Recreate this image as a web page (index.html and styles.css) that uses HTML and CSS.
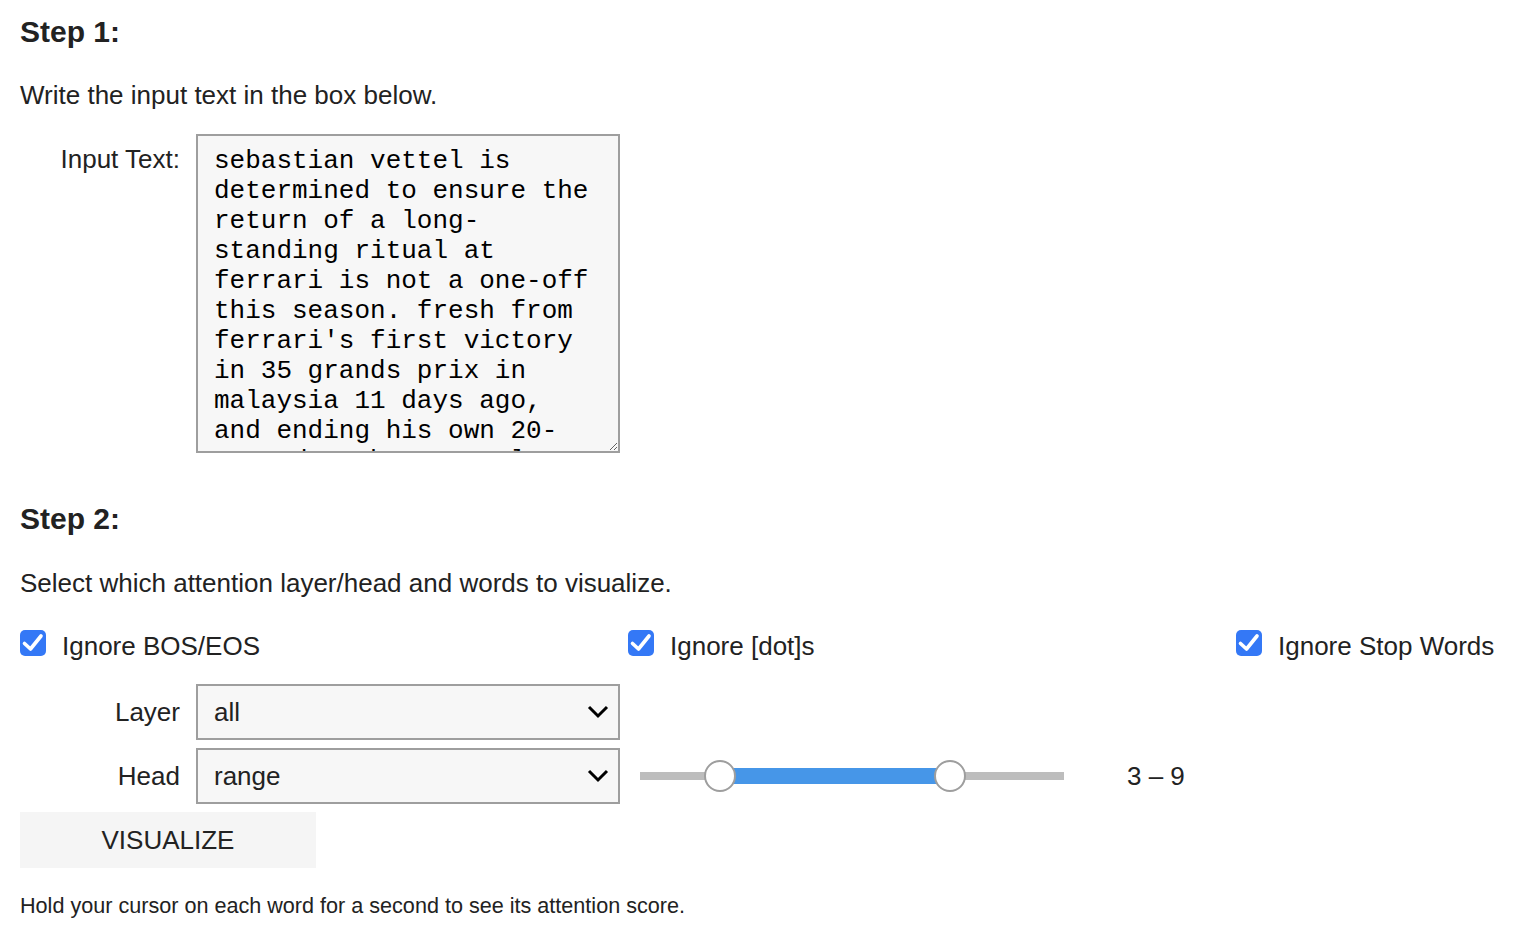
FILE: index.html
```html
<!DOCTYPE html>
<html lang="en">
<head>
<meta charset="utf-8">
<title>Attention Visualizer</title>
<link rel="stylesheet" href="styles.css">
</head>
<body>
<main class="page">
  <h3 class="step step-one">Step 1:</h3>
  <p class="intro">Write the input text in the box below.</p>

  <div class="widget-row row-text">
    <label class="widget-label label-text" for="inputText">Input Text:</label>
    <textarea id="inputText" class="textarea" spellcheck="false">sebastian vettel is determined to ensure the return of a long-standing ritual at ferrari is not a one-off this season. fresh from ferrari's first victory in 35 grands prix in malaysia 11 days ago, and ending his own 20-race drought, vettel was ordered to take part in a traditional celebration at the team's factory in maranello.</textarea>
  </div>

  <h3 class="step step-two">Step 2:</h3>
  <p class="select-intro">Select which attention layer/head and words to visualize.</p>

  <div class="checks">
    <div class="check">
      <span class="check-box"><svg width="26" height="26" viewBox="0 0 26 26"><path d="M4.5 13.5 L10.5 19 L21 6" fill="none" stroke="#fff" stroke-width="3.6" stroke-linecap="round" stroke-linejoin="round"/></svg></span>
      <span class="check-label">Ignore BOS/EOS</span>
    </div>
    <div class="check">
      <span class="check-box"><svg width="26" height="26" viewBox="0 0 26 26"><path d="M4.5 13.5 L10.5 19 L21 6" fill="none" stroke="#fff" stroke-width="3.6" stroke-linecap="round" stroke-linejoin="round"/></svg></span>
      <span class="check-label">Ignore [dot]s</span>
    </div>
    <div class="check">
      <span class="check-box"><svg width="26" height="26" viewBox="0 0 26 26"><path d="M4.5 13.5 L10.5 19 L21 6" fill="none" stroke="#fff" stroke-width="3.6" stroke-linecap="round" stroke-linejoin="round"/></svg></span>
      <span class="check-label">Ignore Stop Words</span>
    </div>
  </div>

  <div class="widget-row row-select">
    <span class="widget-label">Layer</span>
    <div class="dropdown">
      <span class="dropdown-value">all</span>
      <svg class="chevron" width="22" height="14" viewBox="0 0 22 14"><path d="M2 2 L11 11 L20 2" fill="none" stroke="#000" stroke-width="3"/></svg>
    </div>
  </div>

  <div class="widget-row row-select">
    <span class="widget-label">Head</span>
    <div class="dropdown">
      <span class="dropdown-value">range</span>
      <svg class="chevron" width="22" height="14" viewBox="0 0 22 14"><path d="M2 2 L11 11 L20 2" fill="none" stroke="#000" stroke-width="3"/></svg>
    </div>
    <div class="slider">
      <div class="track"></div>
      <div class="range" style="left:18.87%;width:54.24%"></div>
      <div class="thumb" style="left:18.87%"></div>
      <div class="thumb" style="left:73.11%"></div>
    </div>
    <span class="readout">3 – 9</span>
  </div>

  <button class="visualize" type="button">VISUALIZE</button>

  <p class="footnote">Hold your cursor on each word for a second to see its attention score.</p>
</main>
</body>
</html>
```

FILE: styles.css
```css
html, body {
  margin: 0;
  padding: 0;
  background: #ffffff;
  overflow: hidden;
}

body {
  font-family: "Liberation Sans", Arial, Helvetica, sans-serif;
  font-size: 26px;
  color: #222222;
}

.page {
  padding: 0 20px;
}

.step {
  margin: 0;
  font-size: 30px;
  line-height: 36px;
  font-weight: bold;
  color: #222222;
}

.step-one {
  padding-top: 14px;
}

.step-two {
  margin-top: 44px;
}

.intro,
.select-intro {
  margin: 30px 0 0;
  line-height: 30px;
}

.select-intro {
  margin-top: 31px;
}

.widget-row {
  display: flex;
  align-items: center;
  padding: 4px 0;
}

.row-text {
  margin-top: 20px;
  align-items: flex-start;
}

.widget-label {
  width: 160px;
  margin-right: 16px;
  text-align: right;
  line-height: 30px;
  flex: none;
}

.label-text {
  padding-top: 10px;
}

.textarea {
  box-sizing: border-box;
  width: 424px;
  height: 319px;
  margin: 0;
  padding: 10px 16px 6px;
  border: 2px solid #9e9e9e;
  border-radius: 0;
  background: #f7f7f7;
  color: #000000;
  font-family: "Liberation Mono", "Courier New", monospace;
  font-size: 26px;
  line-height: 30px;
  overflow: hidden;
  resize: both;
  outline: none;
}

.checks {
  margin-top: 20px;
  height: 56px;
  display: grid;
  grid-template-columns: 608px 608px auto;
  align-items: center;
}

.check {
  display: flex;
  align-items: center;
}

.check-box {
  width: 26px;
  height: 26px;
  border-radius: 5px;
  background: #3478f6;
  margin-right: 16px;
  margin-bottom: 6px;
  flex: none;
  display: flex;
}

.check-label {
  line-height: 30px;
  white-space: nowrap;
}

.row-select {
  height: 56px;
}

.checks + .row-select {
  margin-top: 6px;
}

.dropdown {
  box-sizing: border-box;
  width: 424px;
  height: 56px;
  border: 2px solid #9e9e9e;
  background: #f7f7f7;
  padding: 0 9px 0 16px;
  display: flex;
  align-items: center;
  justify-content: space-between;
  flex: none;
}

.dropdown-value {
  line-height: 30px;
}

.chevron {
  display: block;
}

.slider {
  position: relative;
  width: 424px;
  height: 56px;
  margin-left: 20px;
  flex: none;
}

.track {
  position: absolute;
  left: 0;
  right: 0;
  top: 24px;
  height: 8px;
  background: #bdbdbd;
}

.range {
  position: absolute;
  top: 20px;
  height: 16px;
  background: #4696e8;
}

.thumb {
  position: absolute;
  top: 12px;
  width: 32px;
  height: 32px;
  margin-left: -16px;
  box-sizing: border-box;
  border: 2px solid #9e9e9e;
  border-radius: 50%;
  background: #ffffff;
}

.readout {
  margin-left: 63px;
  line-height: 30px;
}

.visualize {
  display: block;
  margin: 4px 0 0;
  width: 296px;
  height: 56px;
  border: none;
  background: #f5f5f5;
  color: #222222;
  font-family: "Liberation Sans", Arial, Helvetica, sans-serif;
  font-size: 26px;
  padding: 0;
}

.footnote {
  margin: 25px 0 0;
  font-size: 21.6px;
  line-height: 26px;
}
```
